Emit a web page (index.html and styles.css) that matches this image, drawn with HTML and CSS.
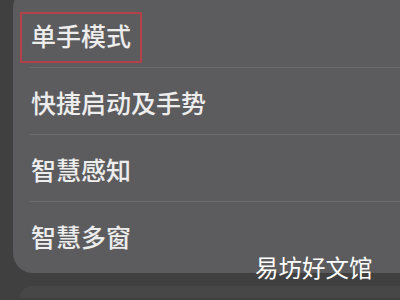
FILE: index.html
```html
<!DOCTYPE html>
<html>
<head lang="zh">
    <meta charset="UTF-8">
    <title>辅助功能</title>
    <link rel="stylesheet" href="styles.css">
</head>
<body>
<div class="settingsCard">
    <ul class="itemList">
        <li class="item">单手模式<span class="markBox"></span></li>
        <li class="item">快捷启动及手势</li>
        <li class="item">智慧感知</li>
        <li class="item lastItem">智慧多窗</li>
    </ul>
</div>
<div class="nextCard"></div>
<div class="watermark">易坊好文馆</div>
</body>
</html>
```

FILE: styles.css
```css
*{
    margin: 0;
    padding: 0;
}
html,body{
    width: 400px;
    height: 300px;
    overflow: hidden;
}
body{
    background-color: #404040;
    font-family: "Noto Sans CJK SC", "Noto Sans", sans-serif;
    position: relative;
}
.settingsCard{
    margin: -12px 0 0 13px;
    padding: 13px 0 5px 0;
    background-color: #5c5c5e;
    border-radius: 20px 0 0 20px;
}
.itemList{
    list-style: none;
}
.itemList .item{
    position: relative;
    height: 63px;
    line-height: 63px;
    padding-top: 3px;
    margin-left: 17px;
    padding-left: 1px;
    border-bottom: 1px solid #6c6c6e;
    font-size: 25px;
    font-weight: 500;
    color: #ededed;
}
.itemList .lastItem{
    border-bottom: none;
}
.markBox{
    position: absolute;
    left: -10px;
    top: 11px;
    width: 118px;
    height: 47px;
    border: 2px solid #b2414a;
}
.nextCard{
    margin: 13px 0 0 20px;
    height: 12px;
    background-color: #474747;
    border-radius: 20px 0 0 0;
}
.watermark{
    position: absolute;
    left: 255px;
    top: 252px;
    font-size: 23.5px;
    line-height: 30px;
    color: #ffffff;
    font-weight: 400;
}
```
